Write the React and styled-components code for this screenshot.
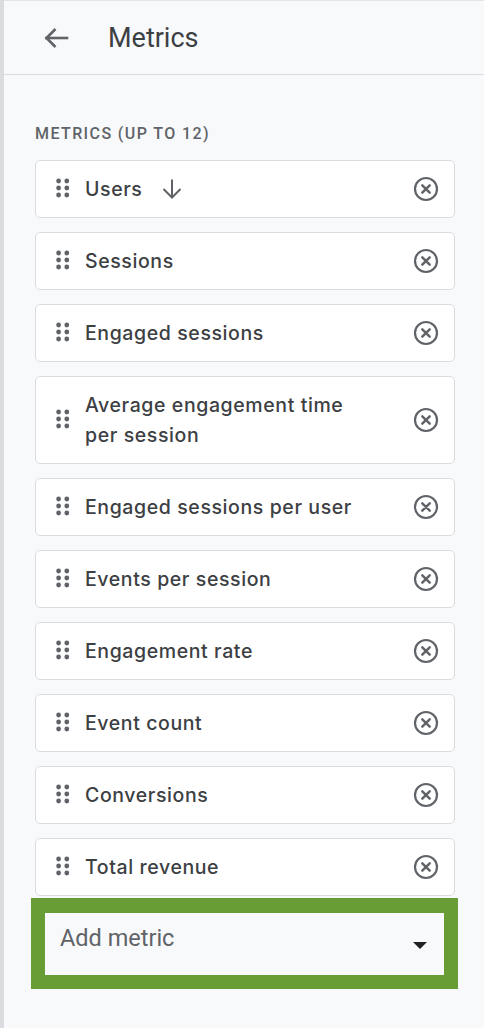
import React from "react";
import styled, { createGlobalStyle } from "styled-components";

const Global = createGlobalStyle`
  html, body { margin: 0; padding: 0; background: #f8f9fa; }
  body { font-family: Roboto, "Noto Sans", Arial, sans-serif; -webkit-font-smoothing: antialiased; }
  * { box-sizing: border-box; }
`;

const Page = styled.div`
  display: flex;
  min-height: 1028px;
  width: 484px;
`;

const SideStrip = styled.div`
  width: 4px;
  flex: none;
  background: #dadce0;
`;

const Panel = styled.div`
  flex: 1;
  background: #f8f9fa;
  border-top: 1px solid #e3e4e6;
  display: flex;
  flex-direction: column;
`;

const Header = styled.header`
  height: 74px;
  display: flex;
  align-items: center;
  padding-left: 39px;
  border-bottom: 1px solid #dadce0;
`;

const BackButton = styled.button`
  border: 0;
  background: none;
  padding: 0;
  margin: 0 39px 0 0;
  width: 26px;
  height: 24px;
  display: flex;
  color: #5f6368;
  cursor: pointer;
`;

const Title = styled.h1`
  margin: 0;
  font-size: 27px;
  font-weight: 400;
  color: #3c4043;
  line-height: 32px;
`;

const Section = styled.section`
  padding: 50px 29px 0 31px;
  display: flex;
  flex-direction: column;
`;

const SectionLabel = styled.div`
  font-size: 16px;
  line-height: 18px;
  font-weight: 500;
  letter-spacing: 1.4px;
  color: #5f6368;
  text-transform: uppercase;
  margin-bottom: 17px;
`;

const List = styled.div`
  display: flex;
  flex-direction: column;
  gap: 14px;
`;

const Card = styled.div`
  display: flex;
  align-items: center;
  background: #ffffff;
  border: 1px solid #dadce0;
  border-radius: 5px;
  padding: 13px 15px 13px 20px;
`;

const Handle = styled.span`
  display: flex;
  flex: none;
  color: #5f6368;
  margin-right: 15px;
  margin-top: -3px;
`;

const Label = styled.span`
  flex: 1;
  display: flex;
  align-items: center;
  font-family: Inter, Roboto, sans-serif;
  font-size: 19.5px;
  line-height: 30px;
  font-weight: 500;
  letter-spacing: 0.6px;
  color: #3c4043;
`;

const LabelText = styled.span`
  max-width: 290px;
`;

const SortIcon = styled.span`
  display: flex;
  margin-left: 19px;
  color: #5f6368;
`;

const RemoveButton = styled.button`
  border: 0;
  background: none;
  padding: 0;
  display: flex;
  flex: none;
  color: #5f6368;
  cursor: pointer;
`;

const Highlight = styled.div`
  margin: 2px -3px 0 -4px;
  border: 14px solid #689c35;
  border-top-width: 15px;
`;

const Select = styled.div`
  height: 62px;
  display: flex;
  justify-content: space-between;
  background: #f8f9fa;
  padding: 0 17px 0 15px;
`;

const SelectText = styled.span`
  padding-top: 11px;
  font-size: 23.5px;
  line-height: 28px;
  color: #5f6368;
`;

const Caret = styled.span`
  align-self: center;
  margin-top: 3px;
  width: 0;
  height: 0;
  border-left: 7px solid transparent;
  border-right: 7px solid transparent;
  border-top: 7px solid #202124;
`;

const ArrowBack = () => (
  <svg width="26" height="24" viewBox="0 0 26 24" fill="none" stroke="currentColor" strokeWidth="2.6" strokeLinecap="square">
    <path d="M24 12H3.5" />
    <path d="M12.5 3L3.5 12l9 9" strokeLinecap="butt" />
  </svg>
);

const DragDots = () => (
  <svg width="14" height="20" viewBox="0 0 14 20" fill="currentColor">
    {[3, 10, 17].map((y) => (
      <React.Fragment key={y}>
        <circle cx="2.6" cy={y} r="2.4" />
        <circle cx="10.8" cy={y} r="2.4" />
      </React.Fragment>
    ))}
  </svg>
);

const ArrowDown = () => (
  <svg width="22" height="22" viewBox="0 0 22 22" fill="none" stroke="currentColor" strokeWidth="2">
    <path d="M11 1.5v18" />
    <path d="M2.5 11L11 19.5l8.5-8.5" />
  </svg>
);

const RemoveIcon = () => (
  <svg width="26" height="26" viewBox="0 0 26 26" fill="none" stroke="currentColor">
    <circle cx="13" cy="13" r="11" strokeWidth="2.2" />
    <path d="M9.3 9.3l7.4 7.4M16.7 9.3l-7.4 7.4" strokeWidth="2.4" strokeLinecap="round" />
  </svg>
);

const metrics = [
  { name: "Users", sorted: true },
  { name: "Sessions" },
  { name: "Engaged sessions" },
  { name: "Average engagement time per session" },
  { name: "Engaged sessions per user" },
  { name: "Events per session" },
  { name: "Engagement rate" },
  { name: "Event count" },
  { name: "Conversions" },
  { name: "Total revenue" },
];

export default function App() {
  return (
    <>
      <Global />
      <Page>
        <SideStrip />
        <Panel>
          <Header>
            <BackButton aria-label="Back">
              <ArrowBack />
            </BackButton>
            <Title>Metrics</Title>
          </Header>
          <Section>
            <SectionLabel>Metrics (up to 12)</SectionLabel>
            <List>
              {metrics.map((m) => (
                <Card key={m.name}>
                  <Handle>
                    <DragDots />
                  </Handle>
                  <Label>
                    <LabelText>{m.name}</LabelText>
                    {m.sorted && (
                      <SortIcon>
                        <ArrowDown />
                      </SortIcon>
                    )}
                  </Label>
                  <RemoveButton aria-label={`Remove ${m.name}`}>
                    <RemoveIcon />
                  </RemoveButton>
                </Card>
              ))}
            </List>
            <Highlight>
              <Select>
                <SelectText>Add metric</SelectText>
                <Caret />
              </Select>
            </Highlight>
          </Section>
        </Panel>
      </Page>
    </>
  );
}
